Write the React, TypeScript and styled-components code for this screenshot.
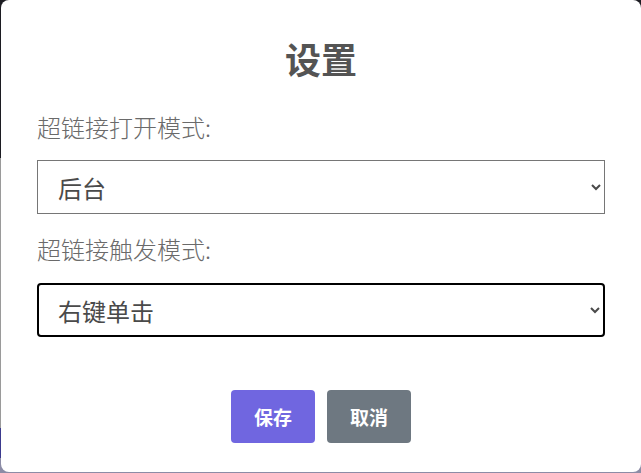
import React from "react";
import styled, { createGlobalStyle } from "styled-components";

const Global = createGlobalStyle`
  html, body { margin: 0; padding: 0; }
  body {
    width: 641px;
    height: 473px;
    overflow: hidden;
    font-family: "Noto Sans CJK SC", "Noto Sans", sans-serif;
    background: linear-gradient(
      to bottom,
      #1c1c22 0px, #1c1c22 158px,
      #9a9a9a 158px, #9a9a9a 428px,
      #3b3a8e 428px, #3b3a8e 458px,
      #8c8ca6 458px, #8c8ca6 473px
    );
  }
`;

const Popup = styled.div`
  box-sizing: border-box;
  margin-left: 1px;
  width: 640px;
  height: 472px;
  background: #fff;
  border-radius: 8px;
  padding: 36px 36px 0 36px;
  display: flex;
  flex-direction: column;
`;

const Title = styled.h2`
  margin: 0 0 32px;
  text-align: center;
  font-size: 36px;
  line-height: 44px;
  font-weight: 700;
  color: #545454;
`;

const Label = styled.label<{ $gap: number }>`
  display: block;
  margin: 0 0 ${(p) => p.$gap}px;
  font-size: 24px;
  line-height: 30px;
  font-weight: 300;
  color: #6a6a6a;
`;

const Select = styled.select<{ $focused?: boolean }>`
  box-sizing: border-box;
  width: 568px;
  height: 54px;
  margin: 0 0 ${(p) => (p.$focused ? 53 : 20)}px;
  padding: 0 0 0 ${(p) => (p.$focused ? 15 : 16)}px;
  font-family: inherit;
  font-size: 24px;
  color: #4a4a4a;
  background: #fff;
  border: ${(p) => (p.$focused ? "2px solid #000" : "1px solid #767676")};
  border-radius: ${(p) => (p.$focused ? "4px" : "0")};
  outline: none;
`;

const Actions = styled.div`
  display: flex;
  justify-content: center;
  gap: 12px;
`;

const Button = styled.button<{ $kind: "confirm" | "cancel" }>`
  box-sizing: border-box;
  width: 84px;
  height: 53px;
  border: 0;
  border-radius: 4px;
  font-family: inherit;
  font-size: 19px;
  font-weight: 700;
  color: #fff;
  background: ${(p) => (p.$kind === "confirm" ? "#7066e0" : "#6e7881")};
  cursor: pointer;
`;

export default function App() {
  return (
    <>
      <Global />
      <Popup>
        <Title>设置</Title>
        <Label $gap={18}>超链接打开模式:</Label>
        <Select defaultValue="bg">
          <option value="bg">后台</option>
          <option value="fg">前台</option>
        </Select>
        <Label $gap={19}>超链接触发模式:</Label>
        <Select $focused defaultValue="right">
          <option value="right">右键单击</option>
          <option value="left">左键单击</option>
        </Select>
        <Actions>
          <Button $kind="confirm">保存</Button>
          <Button $kind="cancel">取消</Button>
        </Actions>
      </Popup>
    </>
  );
}
